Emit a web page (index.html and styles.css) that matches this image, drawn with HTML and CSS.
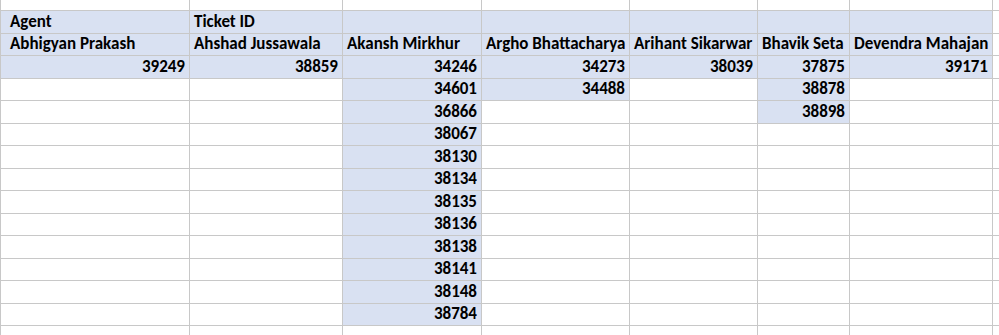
FILE: index.html
```html
<!DOCTYPE html>
<html>
<head>
<meta charset="utf-8">
<link rel="stylesheet" href="styles.css">
</head>
<body>
<div class="sheet">
  <!-- partial row above -->
  <div class="c"></div><div class="c"></div><div class="c"></div><div class="c"></div><div class="c"></div><div class="c"></div><div class="c"></div><div class="c"></div>
  <!-- header row -->
  <div class="c b a">Agent</div><div class="c b">Ticket ID</div><div class="c b"></div><div class="c b"></div><div class="c b"></div><div class="c b"></div><div class="c b"></div><div class="c"></div>
  <!-- names -->
  <div class="c b a">Abhigyan Prakash</div><div class="c b">Ahshad Jussawala</div><div class="c b">Akansh Mirkhur</div><div class="c b">Argho Bhattacharya</div><div class="c b">Arihant Sikarwar</div><div class="c b">Bhavik Seta</div><div class="c b">Devendra Mahajan</div><div class="c"></div>
  <!-- data -->
  <div class="c b r">39249</div><div class="c b r">38859</div><div class="c b r">34246</div><div class="c b r">34273</div><div class="c b r">38039</div><div class="c b r">37875</div><div class="c b r">39171</div><div class="c"></div>
  <div class="c"></div><div class="c"></div><div class="c b r">34601</div><div class="c b r">34488</div><div class="c"></div><div class="c b r">38878</div><div class="c"></div><div class="c"></div>
  <div class="c"></div><div class="c"></div><div class="c b r">36866</div><div class="c"></div><div class="c"></div><div class="c b r">38898</div><div class="c"></div><div class="c"></div>
  <div class="c"></div><div class="c"></div><div class="c b r">38067</div><div class="c"></div><div class="c"></div><div class="c"></div><div class="c"></div><div class="c"></div>
  <div class="c"></div><div class="c"></div><div class="c b r">38130</div><div class="c"></div><div class="c"></div><div class="c"></div><div class="c"></div><div class="c"></div>
  <div class="c"></div><div class="c"></div><div class="c b r">38134</div><div class="c"></div><div class="c"></div><div class="c"></div><div class="c"></div><div class="c"></div>
  <div class="c"></div><div class="c"></div><div class="c b r">38135</div><div class="c"></div><div class="c"></div><div class="c"></div><div class="c"></div><div class="c"></div>
  <div class="c"></div><div class="c"></div><div class="c b r">38136</div><div class="c"></div><div class="c"></div><div class="c"></div><div class="c"></div><div class="c"></div>
  <div class="c"></div><div class="c"></div><div class="c b r">38138</div><div class="c"></div><div class="c"></div><div class="c"></div><div class="c"></div><div class="c"></div>
  <div class="c"></div><div class="c"></div><div class="c b r">38141</div><div class="c"></div><div class="c"></div><div class="c"></div><div class="c"></div><div class="c"></div>
  <div class="c"></div><div class="c"></div><div class="c b r">38148</div><div class="c"></div><div class="c"></div><div class="c"></div><div class="c"></div><div class="c"></div>
  <div class="c"></div><div class="c"></div><div class="c b r">38784</div><div class="c"></div><div class="c"></div><div class="c"></div><div class="c"></div><div class="c"></div>
  <!-- partial row below -->
  <div class="c"></div><div class="c"></div><div class="c"></div><div class="c"></div><div class="c"></div><div class="c"></div><div class="c"></div><div class="c"></div>
</div>
</body>
</html>
```
FILE: styles.css
```css
html, body {
  margin: 0;
  padding: 0;
  background: #ffffff;
}
body {
  width: 999px;
  height: 335px;
  overflow: hidden;
}
.sheet {
  display: grid;
  grid-template-columns: 188px 152px 138px 147px 127px 91px 142px 20px;
  grid-template-rows: 10px 22px 21px 22px 21px 22px 21px 22px 21px 22px 21px 22px 21px 22px 21px 12px;
  gap: 1px;
  padding-left: 1px;
  background: #c8c8c8;
  width: max-content;
  font-family: "Carlito", "Lato", "Liberation Sans", sans-serif;
  font-weight: 700;
  font-size: 17px;
  color: #000;
}
.c {
  background: #ffffff;
  display: flex;
  align-items: flex-end;
  padding: 0 4px 1px 4px;
  line-height: 20px;
  white-space: nowrap;
  overflow: hidden;
}
.b {
  background: #d9e1f2;
}
.a {
  padding-left: 9px;
}
.r {
  justify-content: flex-end;
}
```
